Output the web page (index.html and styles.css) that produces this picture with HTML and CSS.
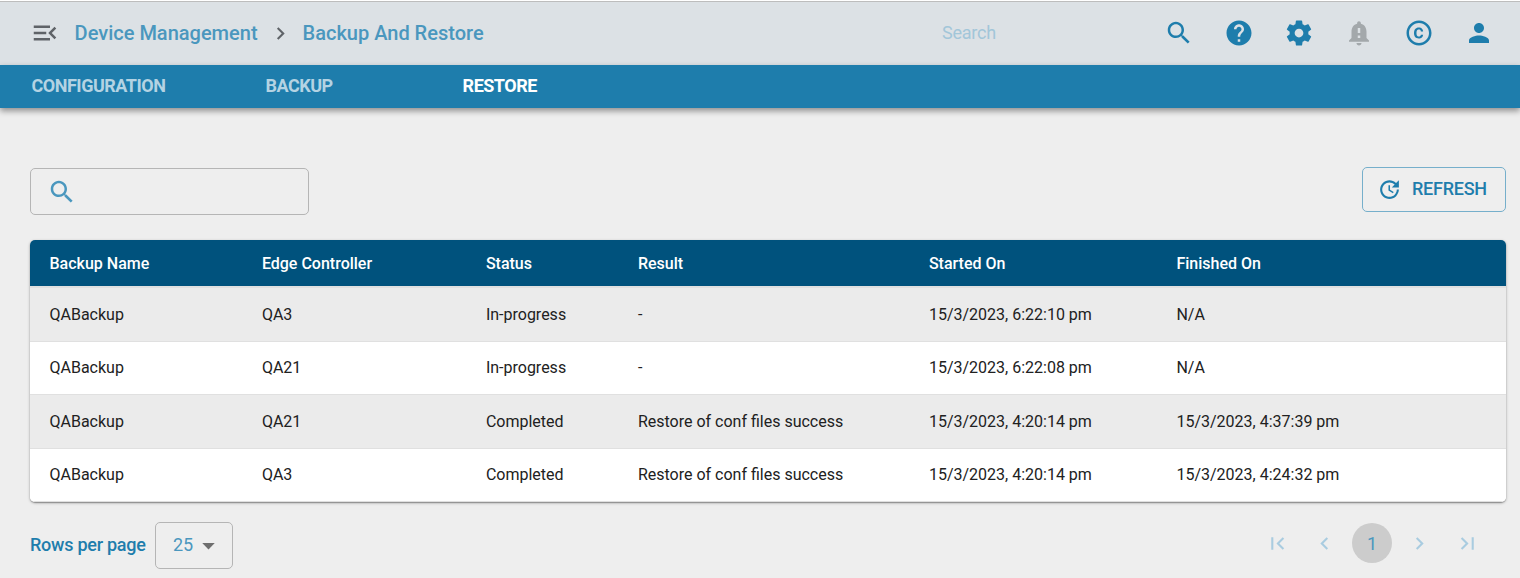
FILE: index.html
```
<!DOCTYPE html>
<html lang="en">
<head>
<meta charset="utf-8">
<title>Backup And Restore</title>
<link rel="stylesheet" href="styles.css">
</head>
<body>
<header class="topbar">
  <svg class="icon menu" viewBox="0 0 24 24"><path d="M3 18h13v-2H3v2zm0-5h10v-2H3v2zm0-7v2h13V6H3zm18 9.590L17.420 12 21 8.410 19.590 7l-5 5 5 5L21 15.590z"/></svg>
  <nav class="crumbs">
    <a class="crumb">Device Management</a>
    <svg class="icon sm sep" viewBox="0 0 24 24"><path d="M10 6 8.590 7.410 13.170 12l-4.580 4.590L10 18l6-6z"/></svg>
    <a class="crumb last">Backup And Restore</a>
  </nav>
  <span class="top-search">Search</span>
  <div class="actions">
    <svg class="icon" viewBox="0 0 24 24"><path d="M15.500 14h-.79l-.28-.27C15.410 12.590 16 11.110 16 9.500 16 5.910 13.090 3 9.500 3S3 5.910 3 9.500 5.910 16 9.500 16c1.610 0 3.090-.59 4.230-1.570l.27.28v.79l5 4.990L20.490 19l-4.990-5zm-6 0C7.010 14 5 11.990 5 9.500S7.010 5 9.500 5 14 7.010 14 9.500 11.990 14 9.500 14z"/></svg>
    <svg class="icon" viewBox="0 0 24 24"><path d="M12 2C6.480 2 2 6.480 2 12s4.480 10 10 10 10-4.480 10-10S17.520 2 12 2zm1 17h-2v-2h2v2zm2.070-7.750-.9.920C13.450 12.900 13 13.500 13 15h-2v-.5c0-1.100.45-2.100 1.170-2.830l1.240-1.260c.37-.36.59-.86.59-1.410 0-1.100-.9-2-2-2s-2 .9-2 2H8c0-2.210 1.790-4 4-4s4 1.790 4 4c0 .88-.36 1.680-.93 2.250z"/></svg>
    <svg class="icon" viewBox="0 0 24 24"><path d="M19.430 12.980c.04-.32.07-.64.07-.98s-.03-.66-.07-.98l2.110-1.650c.19-.15.24-.42.12-.64l-2-3.460c-.12-.22-.39-.3-.61-.22l-2.490 1c-.52-.4-1.080-.73-1.690-.98l-.38-2.650C14.460 2.180 14.250 2 14 2h-4c-.25 0-.46.18-.49.42l-.38 2.650c-.61.25-1.170.59-1.690.98l-2.490-1c-.23-.09-.49 0-.61.22l-2 3.460c-.13.22-.07.49.12.64l2.110 1.650c-.04.32-.07.65-.07.98s.03.66.07.98l-2.110 1.650c-.19.15-.24.42-.12.64l2 3.460c.12.22.39.3.61.22l2.490-1c.52.4 1.080.73 1.690.98l.38 2.650c.03.24.24.42.49.42h4c.25 0 .46-.18.49-.42l.38-2.650c.61-.25 1.170-.59 1.690-.98l2.490 1c.23.09.49 0 .61-.22l2-3.460c.12-.22.07-.49-.12-.64l-2.110-1.650zM12 15.500c-1.930 0-3.500-1.570-3.500-3.500s1.570-3.500 3.500-3.500 3.500 1.570 3.500 3.500-1.570 3.500-3.500 3.500z"/></svg>
    <svg class="icon disabled" viewBox="0 0 24 24"><path d="M18 16v-5c0-3.070-1.640-5.640-4.500-6.320V4c0-.83-.67-1.500-1.500-1.500s-1.500.67-1.500 1.500v.68C7.630 5.360 6 7.920 6 11v5l-2 2v1h16v-1l-2-2zm-5 0h-2v-2h2v2zm0-4h-2V8h2v4zm-1 10c1.100 0 2-.9 2-2h-4c0 1.100.89 2 2 2z"/></svg>
    <svg class="icon" viewBox="0 0 24 24"><path d="M10.080 10.860c.05-.33.16-.62.3-.87s.34-.46.59-.62c.24-.15.54-.22.91-.23.23.01.44.05.63.13.2.09.38.21.52.36s.25.33.34.53.13.42.14.64h1.790c-.02-.47-.11-.9-.28-1.290s-.4-.73-.7-1.010-.66-.5-1.080-.66-.88-.23-1.390-.23c-.65 0-1.220.11-1.700.34s-.88.53-1.200.92-.56.84-.71 1.360S8 11.290 8 11.870v.27c0 .58.08 1.120.23 1.640s.39.97.71 1.350.72.69 1.200.91 1.050.34 1.700.34c.47 0 .91-.08 1.320-.23s.77-.36 1.080-.63.56-.58.74-.94.29-.74.3-1.150h-1.790c-.01.21-.06.4-.15.58s-.21.33-.36.46-.32.23-.52.3c-.19.07-.39.09-.6.1-.36-.01-.66-.08-.89-.23-.25-.16-.45-.37-.59-.62s-.25-.55-.3-.88-.08-.67-.08-1v-.27c0-.35.03-.68.08-1.010zM12 2C6.480 2 2 6.480 2 12s4.480 10 10 10 10-4.480 10-10S17.520 2 12 2zm0 18c-4.410 0-8-3.590-8-8s3.590-8 8-8 8 3.590 8 8-3.590 8-8 8z"/></svg>
    <svg class="icon" viewBox="0 0 24 24"><path d="M12 12c2.210 0 4-1.790 4-4s-1.790-4-4-4-4 1.790-4 4 1.790 4 4 4zm0 2c-2.670 0-8 1.340-8 4v2h16v-2c0-2.660-5.330-4-8-4z"/></svg>
  </div>
</header>
<nav class="tabs">
  <a class="tab tab-config">CONFIGURATION</a>
  <a class="tab tab-backup">BACKUP</a>
  <a class="tab active">RESTORE</a>
</nav>
<main class="content">
  <div class="toolbar">
    <div class="filter">
      <svg class="icon" viewBox="0 0 24 24"><path d="M15.500 14h-.79l-.28-.27C15.410 12.590 16 11.110 16 9.500 16 5.910 13.090 3 9.500 3S3 5.910 3 9.500 5.910 16 9.500 16c1.610 0 3.090-.59 4.230-1.570l.27.28v.79l5 4.990L20.490 19l-4.990-5zm-6 0C7.010 14 5 11.990 5 9.500S7.010 5 9.500 5 14 7.010 14 9.500 11.990 14 9.500 14z"/></svg>
    </div>
    <button class="refresh">
      <svg class="icon sm" viewBox="0 0 24 24"><path d="M21 10.120h-6.780l2.740-2.820c-2.730-2.700-7.150-2.800-9.880-.1-2.730 2.710-2.730 7.080 0 9.790s7.150 2.710 9.880 0C18.320 15.650 19 14.080 19 12.100h2c0 1.980-.88 4.550-2.640 6.290-3.510 3.480-9.210 3.480-12.720 0-3.500-3.470-3.530-9.110-.02-12.580s9.140-3.470 12.650 0L21 3v7.120zM12.500 8v4.250l3.500 2.080-.72 1.210L11 13V8h1.500z"/></svg>
      <span class="refresh-label">REFRESH</span>
    </button>
  </div>
  <section class="table">
    <div class="row head"><span>Backup Name</span><span>Edge Controller</span><span>Status</span><span>Result</span><span>Started On</span><span>Finished On</span></div>
    <div class="row odd"><span>QABackup</span><span>QA3</span><span>In-progress</span><span>-</span><span>15/3/2023, 6:22:10 pm</span><span>N/A</span></div>
    <div class="row even"><span>QABackup</span><span>QA21</span><span>In-progress</span><span>-</span><span>15/3/2023, 6:22:08 pm</span><span>N/A</span></div>
    <div class="row odd"><span>QABackup</span><span>QA21</span><span>Completed</span><span>Restore of conf files success</span><span>15/3/2023, 4:20:14 pm</span><span>15/3/2023, 4:37:39 pm</span></div>
    <div class="row even"><span>QABackup</span><span>QA3</span><span>Completed</span><span>Restore of conf files success</span><span>15/3/2023, 4:20:14 pm</span><span>15/3/2023, 4:24:32 pm</span></div>
  </section>
  <footer class="footer">
    <span class="rows-label">Rows per page</span>
    <div class="select"><span class="select-value">25</span><svg class="icon sm caret" viewBox="0 0 24 24"><path d="M6 9.700l6 6.100 6-6.100z"/></svg></div>
    <div class="pager">
      <svg class="icon sm first" viewBox="0 0 24 24"><path d="M18.410 16.590 13.820 12l4.590-4.590L17 6l-6 6 6 6zM6 6h2v12H6z"/></svg>
      <svg class="icon sm" viewBox="0 0 24 24"><path d="M15.410 7.410 14 6l-6 6 6 6 1.410-1.410L10.830 12z"/></svg>
      <span class="page">1</span>
      <svg class="icon sm" viewBox="0 0 24 24"><path d="M10 6 8.590 7.410 13.170 12l-4.580 4.590L10 18l6-6z"/></svg>
      <svg class="icon sm final" viewBox="0 0 24 24"><path d="M5.590 7.410 10.180 12l-4.590 4.590L7 18l6-6-6-6zM16 6h2v12h-2z"/></svg>
    </div>
  </footer>
</main>
</body>
</html>
```
FILE: styles.css
```
* { box-sizing: border-box; }

body {
  margin: 0;
  height: 578px;
  overflow: hidden;
  background: #eee;
  font-family: Roboto, sans-serif;
  font-size: 16px;
  color: #212121;
}

.icon { display: block; flex: none; width: 30px; height: 30px; fill: #1e7dac; }
.icon.sm { width: 25px; height: 25px; }

/* Top bar */
.topbar {
  display: flex;
  align-items: center;
  height: 65px;
  padding: 0 26px 0 30px;
  border-top: 1px solid #fff;
  background: #dce1e5;
  box-shadow: inset 0 1px #bdbdbd;
}
.icon.menu, .icon.sep { fill: #5f6368; }
.crumbs { display: flex; align-items: center; width: 882px; padding-left: 14.600px; }
.crumb { font-size: 20px; font-weight: 500; line-height: 24px; color: #4a97be; }
.icon.sep { margin: 0 10px; }
.top-search { width: 222px; padding-bottom: 2px; font-size: 18px; letter-spacing: -.25px; color: #a2c6d9; }
.actions { display: flex; gap: 30px; }
.icon.disabled { fill: #a3a8ab; }

/* Tabs */
.tabs {
  display: flex;
  align-items: center;
  height: 43px;
  padding: 0 31.600px 2px;
  background: #1e7dac;
  box-shadow: 0 3px 6px rgba(0, 0, 0, .4);
}
.tab { font-size: 18px; font-weight: 700; letter-spacing: -.5px; color: #b4d3e3; }
.tab-config { width: 234px; }
.tab-backup { width: 197px; }
.tab.active { color: #fff; }

/* Content */
.content { padding: 59px 14px 0 30px; }
.toolbar { display: flex; justify-content: space-between; align-items: flex-start; height: 73px; }
.filter {
  display: flex;
  align-items: center;
  width: 279px;
  height: 47px;
  margin-top: 1px;
  padding-left: 16px;
  border: 1px solid #b5b5b5;
  border-radius: 5px;
}
.filter .icon { fill: #4a97be; }
.refresh {
  display: flex;
  align-items: center;
  gap: 10px;
  width: 144px;
  height: 45px;
  padding: 0 0 0 14px;
  border: 1px solid #76afcb;
  border-radius: 5px;
  background: none;
  font: 500 18px Roboto, sans-serif;
  letter-spacing: -.25px;
  color: #1e7dac;
}
.refresh-label { padding-bottom: 2px; }

/* Table */
.table {
  height: 262px;
  border-radius: 5px;
  background: #fff;
  overflow: hidden;
  box-shadow: 0 1px 3px rgba(0, 0, 0, .3), 0 1px 1px rgba(0, 0, 0, .25);
}
.row {
  display: grid;
  grid-template-columns: 212.400px 224px 152px 291px 247.500px 1fr;
  align-items: center;
  padding-left: 19.500px;
  border-bottom: 1px solid #e0e0e0;
}
.row.head {
  height: 48px;
  border-bottom-width: 2px;
  background: #00527d;
  font-weight: 500;
  color: #fff;
}
.row.odd { height: 54px; background: #ebebeb; }
.row.even { height: 53px; padding-bottom: 2px; background: #fff; }

/* Footer */
.footer { display: flex; align-items: center; height: 47px; margin-top: 20px; }
.rows-label { width: 125px; padding-bottom: 2px; font-size: 18px; font-weight: 500; letter-spacing: -.25px; color: #1e7dac; }
.select {
  display: flex;
  align-items: center;
  width: 78px;
  height: 47px;
  padding-left: 17px;
  border: 1px solid #b5b5b5;
  border-radius: 5px;
  font-size: 18px;
  color: #4a97be;
}
.select-value { padding-bottom: 2px; }
.icon.caret { margin-left: 3px; fill: #6e6e6e; }
.pager { display: flex; align-items: center; gap: 15px; margin: 0 26px 5px auto; }
.pager .icon { fill: #a9cce0; }
.pager .first { margin-right: 7px; }
.pager .final { margin-left: 8px; }
.page {
  display: flex;
  align-items: center;
  justify-content: center;
  width: 40px;
  height: 40px;
  border-radius: 50%;
  background: #ccc;
  font-size: 18px;
  color: #4a97be;
}
```
